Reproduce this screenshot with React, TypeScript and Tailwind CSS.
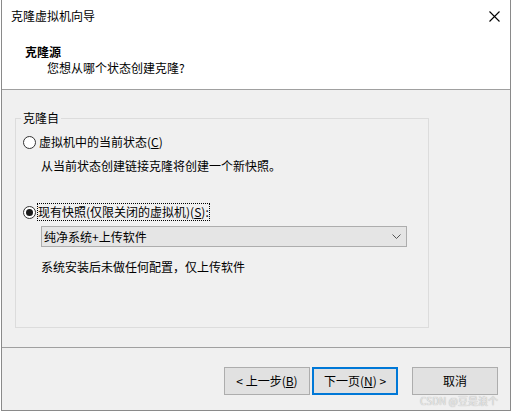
import React from 'react';

const font = { fontFamily: '"Noto Sans CJK SC", "Microsoft YaHei", sans-serif' };

const Radio = ({ checked }: { checked?: boolean }) => (
  <span className="flex h-[13px] w-[13px] shrink-0 items-center justify-center rounded-full border border-[#333333] bg-white">
    {checked && <span className="h-[7px] w-[7px] rounded-full bg-[#1a1a1a]" />}
  </span>
);

const Button = ({ children, primary }: { children: React.ReactNode; primary?: boolean }) => (
  <button
    className={
      primary
        ? 'flex h-[28px] w-[86px] items-center justify-center border-2 border-[#0078d7] bg-[#e1e1e1] text-[12px] leading-[16px] text-black'
        : 'flex h-[28px] w-[86px] items-center justify-center border border-[#adadad] bg-[#e1e1e1] text-[12px] leading-[16px] text-black'
    }
  >
    {children}
  </button>
);

export default function App() {
  return (
    <div className="h-[412px] w-[512px] bg-white pl-[1px]" style={font}>
      <div className="relative flex h-[411px] w-[510px] flex-col border-b border-l border-r border-[#8a8a8a] bg-[#f0f0f0] text-[12px] leading-[16px] text-black">
        {/* header */}
        <div className="h-[90px] border-b border-[#a0a0a0] bg-white">
          <div className="flex items-center justify-between pl-[9px] pr-[10px] pt-[8px]">
            <span>克隆虚拟机向导</span>
            <svg width="11" height="11" viewBox="0 0 11 11" className="mt-[1px]">
              <path d="M0.5 0.5 L10.5 10.5 M10.5 0.5 L0.5 10.5" stroke="#000" strokeWidth="1.1" />
            </svg>
          </div>
          <div className="mt-[20px] pl-[23px] font-bold">克隆源</div>
          <div className="pl-[45px]">您想从哪个状态创建克隆?</div>
        </div>

        {/* body */}
        <div className="h-[257px] pl-[13px] pt-[20px]">
          <fieldset className="h-[218px] w-[414px] border border-[#dcdcdc]">
            <legend className="ml-[5px] px-[2px]">克隆自</legend>
            <div className="mt-[8px] flex items-center gap-[3px] pl-[7px]">
              <Radio />
              <span>
                虚拟机中的当前状态(<span className="underline">C</span>)
              </span>
            </div>
            <div className="mt-[8px] pl-[25px]">从当前状态创建链接克隆将创建一个新快照。</div>

            <div className="mt-[30px] flex items-center gap-[2px] pl-[7px]">
              <Radio checked />
              <span className="outline-1 outline-dotted outline-black">
                现有快照(仅限关闭的虚拟机)(<span className="underline">S</span>):
              </span>
            </div>
            <div className="ml-[25px] mt-[6px] flex h-[21px] w-[366px] items-center justify-between border border-[#adadad] bg-[#e5e5e5] pl-[2px] pr-[5px]">
              <span>纯净系统+上传软件</span>
              <svg width="9" height="6" viewBox="0 0 9 6">
                <path d="M0.5 0.5 L4.5 4.5 L8.5 0.5" fill="none" stroke="#555" strokeWidth="1" />
              </svg>
            </div>
            <div className="mt-[12px] pl-[25px]">系统安装后未做任何配置，仅上传软件</div>
          </fieldset>
        </div>

        {/* footer */}
        <div className="flex flex-1 items-start justify-end border-t border-[#a0a0a0] pr-[12px] pt-[19px]">
          <div className="flex gap-[2px]">
            <Button>
              &lt; 上一步(<span className="underline">B</span>)
            </Button>
            <Button primary>
              下一页(<span className="underline">N</span>) &gt;
            </Button>
          </div>
          <div className="ml-[14px]">
            <Button>取消</Button>
          </div>
        </div>

        <span className="absolute bottom-[3px] right-[12px] text-[10px] leading-[12px] text-[#e8e8e8] [text-shadow:0_0_1px_#9a9a9a]">
          CSDN @豆是浪个
        </span>
      </div>
    </div>
  );
}
